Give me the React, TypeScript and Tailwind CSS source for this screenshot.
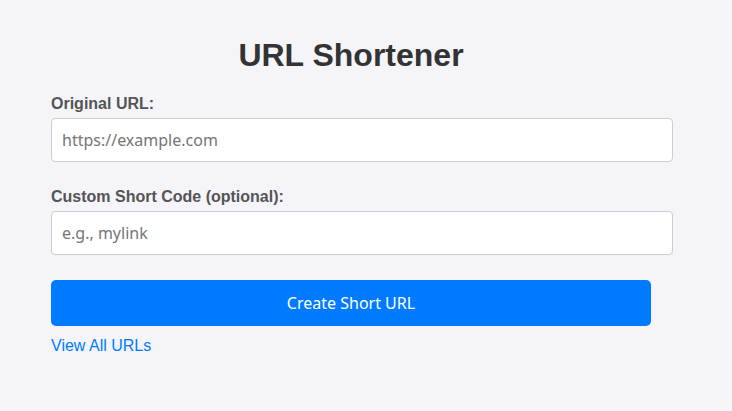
export default function App() {
  return (
    <div className="min-h-[411px] bg-[#f4f4f9] pl-[51px] pr-[81px] pt-[37px] font-['Noto_Sans',sans-serif]">
      <div className="w-[600px]">
        <h1 className="mb-[21px] text-center font-['Liberation_Sans',Arial,sans-serif] text-[32px] font-bold leading-[37px] text-[#333]">
          URL Shortener
        </h1>
        <form className="flex flex-col">
          <label className="mb-[5px] font-['Liberation_Sans',Arial,sans-serif] text-base font-bold leading-[18px] text-[#555]">
            Original URL:
          </label>
          <input
            type="text"
            placeholder="https://example.com"
            className="box-content h-[22px] w-[600px] rounded-[4px] border border-[#ccc] bg-white px-[10px] py-[10px] text-base text-[#333] placeholder:text-[#757575] focus:outline-none"
          />
          <label className="mb-[5px] mt-[26px] font-['Liberation_Sans',Arial,sans-serif] text-base font-bold leading-[18px] text-[#555]">
            Custom Short Code (optional):
          </label>
          <input
            type="text"
            placeholder="e.g., mylink"
            className="box-content h-[22px] w-[600px] rounded-[4px] border border-[#ccc] bg-white px-[10px] py-[10px] text-base text-[#333] placeholder:text-[#757575] focus:outline-none"
          />
          <button
            type="submit"
            className="mt-[25px] h-[46px] w-[600px] rounded-[5px] bg-[#007bff] text-base text-white"
          >
            Create Short URL
          </button>
        </form>
        <a
          href="#"
          className="mt-[11px] block w-fit font-['Liberation_Sans',Arial,sans-serif] text-base leading-[18px] text-[#007bff]"
        >
          View All URLs
        </a>
      </div>
    </div>
  );
}
